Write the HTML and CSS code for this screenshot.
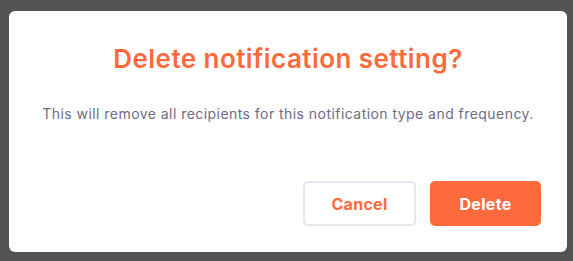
FILE: index.html
```html
<!DOCTYPE html>
<html>
<head>
<meta charset="utf-8">
<link rel="stylesheet" href="styles.css">
</head>
<body>
<div class="modal">
  <h1 class="title">Delete notification setting?</h1>
  <p class="desc">This will remove all recipients for this notification type and frequency.</p>
  <div class="actions">
    <button class="btn btn-cancel">Cancel</button>
    <button class="btn btn-delete">Delete</button>
  </div>
</div>
</body>
</html>
```
FILE: styles.css
```css
html, body {
  margin: 0;
  padding: 0;
  background: #545454;
  height: 100%;
}
body {
  padding: 11px 0 0 9px;
  box-sizing: border-box;
}
.modal {
  width: 558px;
  height: 241px;
  background: #fff;
  border-radius: 6px;
  box-sizing: border-box;
  display: flex;
  flex-direction: column;
  padding: 0 26px 26px 26px;
}
.title {
  margin: 32px 0 0 0;
  text-align: center;
  font-family: "Inter", sans-serif;
  font-weight: 600;
  font-size: 26px;
  line-height: 32px;
  color: #ff6a3d;
  letter-spacing: 0.45px;
}
.desc {
  margin: 30px 0 0 0;
  text-align: center;
  font-family: "Inter", sans-serif;
  font-size: 14px;
  line-height: 18px;
  color: #6e6b87;
  letter-spacing: 0.45px;
  white-space: nowrap;
}
.actions {
  margin-top: auto;
  display: flex;
  justify-content: flex-end;
  gap: 14px;
}
.btn {
  height: 45px;
  border-radius: 5px;
  font-family: "Inter", sans-serif;
  font-weight: 700;
  font-size: 16px;
  letter-spacing: 0.3px;
  cursor: pointer;
}
.btn-cancel {
  width: 113px;
  background: #fff;
  border: 2px solid #e3e7f0;
  color: #ff6a3d;
}
.btn-delete {
  width: 111px;
  background: #ff6a3d;
  border: none;
  color: #fff;
}
```
